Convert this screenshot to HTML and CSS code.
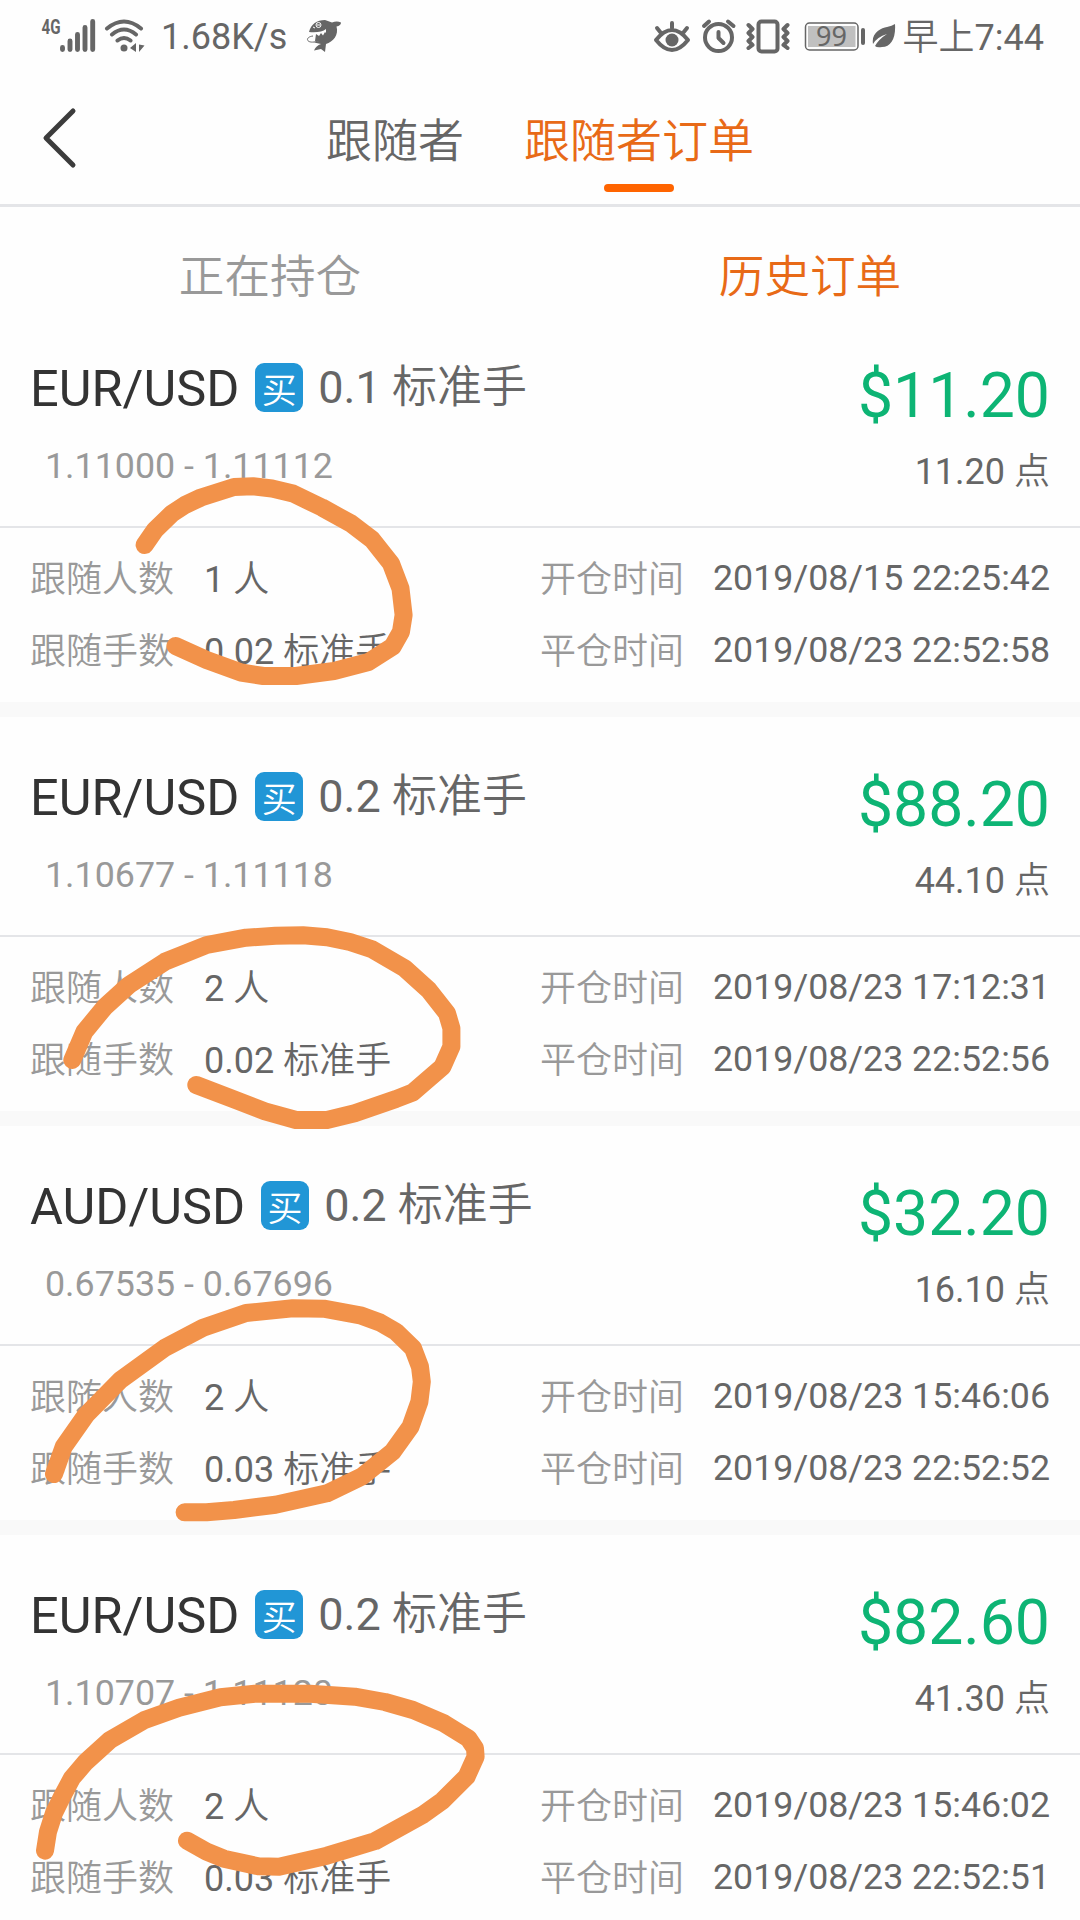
FILE: index.html
```html
<!DOCTYPE html>
<html lang="zh-CN">
<head>
<meta charset="utf-8">
<title>跟随者订单</title>
<link rel="stylesheet" href="styles.css">
</head>
<body>
<div class="screen">
  <header class="status">
    <div class="status-left">
      <svg class="net" width="110" height="40" viewBox="40 16 110 40">
        <text class="net-type" x="41.500" y="34" textLength="19" lengthAdjust="spacingAndGlyphs">4G</text>
        <g class="bars"><path d="M62.500 47.500V49.500M70 41V49.500M77.500 34.500V49.500M85 27.500V49.500M92.700 21.500V49.500"/></g>
        <g class="arcs"><path d="M107 28.500Q124 14.500 141 28.500M112 34.500Q124 24.500 136 34.500M117.500 40.500Q124 35.500 130.500 40.500"/></g>
        <circle cx="124" cy="48" r="3.500"/>
        <path d="M136 43V52L130 48ZM139 44.500V52L144.500 45.500Z"/>
      </svg>
      <span class="speed">1.68K/s</span>
      <svg class="shark" width="36" height="36" viewBox="306 19 36 36">
        <path d="M309 33C311 25 317 21 325 21L332 23.500Q337 21.500 341 23.500Q341 26.500 336.500 27.500C339 36 333 43 326 45L325 53L321 50L314 51.500Q316 46.500 321 45L314 43.500Q322 42 326 36L326 30Q321 34 309 33Z"/>
        <path d="M316 35L319 37L321 34L323 36.500L325 33L328 36L322 42L315 42Z"/>
        <path class="shark-line" d="M313 37C305 38 306 44 314 43Q320 43 324 39"/>
        <circle class="shark-eye" cx="318.500" cy="26" r="2.500"/>
        <path class="shark-eye" d="M317 26H320M313 28L315 29"/>
      </svg>
    </div>
    <div class="status-right">
      <svg class="sys" width="216" height="40" viewBox="650 14 216 40">
        <g class="stroke">
          <path d="M656 40Q672 20 688 40Q672 60 656 40ZM672 23V28M657 28L661 33M687 28L683 33"/>
          <circle cx="718.500" cy="37.500" r="13.500"/>
          <path d="M718.500 32V38L723.500 43M704 26L709 21.500M728 21.500L733.500 26"/>
          <rect x="758.500" y="21.500" width="19" height="30" rx="3"/>
          <path class="wave" d="M748.500 25L752.500 29L748.500 33L752.500 37L748.500 41L752.500 45L748.500 48M787.500 25L783.500 29L787.500 33L783.500 37L787.500 41L783.500 45L787.500 48"/>
        </g>
        <circle cx="672" cy="40" r="6.500"/>
        <rect class="battery" x="805.500" y="23" width="52.500" height="27" rx="4"/>
        <rect class="charge" x="808" y="26" width="37.500" height="21"/>
        <rect class="charge" x="845" y="26" width="10.500" height="21"/>
        <rect x="861" y="28" width="4" height="17" rx="2"/>
        <text class="level" x="831.500" y="45.500">99</text>
      </svg>
      <svg class="leaf" width="24" height="26" viewBox="0 0 24 26">
        <path d="M23 1C24 15 19 24 10 24Q5 25 3 23Q7 16 15 11Q5 14 1 21C-1 10 9 5 15 4Q20 3 23 1Z"/>
      </svg>
      <span class="clock"><span class="zh">早上</span>7:44</span>
    </div>
  </header>

  <nav class="navbar">
    <svg class="back" width="40" height="64" viewBox="0 0 40 64"><path d="M34 5L7 32L34 59"/></svg>
    <div class="tabs">
      <span class="tab zh">跟随者</span>
      <span class="tab zh active">跟随者订单</span>
    </div>
  </nav>

  <div class="subtabs zh">
    <span class="subtab">正在持仓</span>
    <span class="subtab active">历史订单</span>
  </div>

  <main class="orders">
    <section class="order">
      <div class="summary">
        <div class="left">
          <div class="title"><span class="pair">EUR/USD</span><span class="badge zh">买</span><span class="lots">0.1 <span class="zh">标准手</span></span></div>
          <div class="price">1.11000 - 1.11112</div>
        </div>
        <div class="right"><div class="profit">$11.20</div><div class="points">11.20 <span class="zh">点</span></div></div>
      </div>
      <div class="details">
        <span class="label zh">跟随人数</span><span class="value">1 <span class="zh">人</span></span>
        <span class="label zh">开仓时间</span><span class="value time">2019/08/15 22:25:42</span>
        <span class="label zh">跟随手数</span><span class="value">0.02 <span class="zh">标准手</span></span>
        <span class="label zh">平仓时间</span><span class="value time">2019/08/23 22:52:58</span>
      </div>
    </section>
    <section class="order">
      <div class="summary">
        <div class="left">
          <div class="title"><span class="pair">EUR/USD</span><span class="badge zh">买</span><span class="lots">0.2 <span class="zh">标准手</span></span></div>
          <div class="price">1.10677 - 1.11118</div>
        </div>
        <div class="right"><div class="profit">$88.20</div><div class="points">44.10 <span class="zh">点</span></div></div>
      </div>
      <div class="details">
        <span class="label zh">跟随人数</span><span class="value">2 <span class="zh">人</span></span>
        <span class="label zh">开仓时间</span><span class="value time">2019/08/23 17:12:31</span>
        <span class="label zh">跟随手数</span><span class="value">0.02 <span class="zh">标准手</span></span>
        <span class="label zh">平仓时间</span><span class="value time">2019/08/23 22:52:56</span>
      </div>
    </section>
    <section class="order">
      <div class="summary">
        <div class="left">
          <div class="title"><span class="pair">AUD/USD</span><span class="badge zh">买</span><span class="lots">0.2 <span class="zh">标准手</span></span></div>
          <div class="price">0.67535 - 0.67696</div>
        </div>
        <div class="right"><div class="profit">$32.20</div><div class="points">16.10 <span class="zh">点</span></div></div>
      </div>
      <div class="details">
        <span class="label zh">跟随人数</span><span class="value">2 <span class="zh">人</span></span>
        <span class="label zh">开仓时间</span><span class="value time">2019/08/23 15:46:06</span>
        <span class="label zh">跟随手数</span><span class="value">0.03 <span class="zh">标准手</span></span>
        <span class="label zh">平仓时间</span><span class="value time">2019/08/23 22:52:52</span>
      </div>
    </section>
    <section class="order">
      <div class="summary">
        <div class="left">
          <div class="title"><span class="pair">EUR/USD</span><span class="badge zh">买</span><span class="lots">0.2 <span class="zh">标准手</span></span></div>
          <div class="price">1.10707 - 1.11120</div>
        </div>
        <div class="right"><div class="profit">$82.60</div><div class="points">41.30 <span class="zh">点</span></div></div>
      </div>
      <div class="details">
        <span class="label zh">跟随人数</span><span class="value">2 <span class="zh">人</span></span>
        <span class="label zh">开仓时间</span><span class="value time">2019/08/23 15:46:02</span>
        <span class="label zh">跟随手数</span><span class="value">0.03 <span class="zh">标准手</span></span>
        <span class="label zh">平仓时间</span><span class="value time">2019/08/23 22:52:51</span>
      </div>
    </section>
  </main>

  <svg class="marker" width="1080" height="1920" viewBox="0 0 1080 1920">
    <polyline points="144.600,545 155,530 172,513.500 185,505 201,497.500 234,487 253,486.300 272,488.500 293,493.500 322,507.500 351,523.500 372,539.500 391,563.500 400.500,588.500 403.600,615 401,631.700 392.500,646.700 368.500,662 334,671 296,676 263.400,676 241,672.500 206.600,660 175.600,646"/>
    <polyline points="72.300,1060 84.400,1031.700 105,1006.700 129,985 165,961.700 206.600,945 246,937.700 275.500,935.700 303,935.300 327,937.300 350,942 372,949.300 404.600,968.300 428.700,990 447,1013.300 451.400,1028.300 451.400,1046.700 442.500,1066.700 413,1092.300 396,1099 354.700,1113.300 327,1120 296,1120 265,1111.300 234,1099.300 196.300,1085"/>
    <polyline points="54,1474 63.700,1446.700 86,1415 120.500,1380 165,1347.700 203,1327.700 246,1313 292.700,1308.300 323.700,1308.700 361.600,1315.700 380,1322.500 396,1331.700 413,1348.300 420,1366.700 421.800,1381.700 419.400,1401.700 410.500,1426.700 392.600,1451.700 361.600,1476.700 327,1493.300 275.500,1504.700 234,1510 206.600,1512.300 184.600,1512.300"/>
    <polyline points="45,1850.700 48,1831.700 54,1813 62,1796.700 72,1778 86,1761.700 110,1740 144.600,1720 179,1707.700 220.400,1697.300 254.800,1693.700 310,1693.700 354.700,1696.700 385,1702 413,1710 444,1723.300 468.300,1738.300 475,1748.300 475.600,1756.700 466.600,1776.700 442.500,1800.700 423.600,1814.300 375.300,1841 327,1855.700 279,1866.700 258.300,1866.300 223.800,1858.700 206.600,1851.700 187,1840.700"/>
  </svg>
</div>
</body>
</html>
```

FILE: styles.css
```css
* { box-sizing: border-box; }
body {
  margin: 0;
  background: #fefefe;
  color: #666;
  font-family: Roboto, "Noto Sans CJK SC", sans-serif;
}
.zh { font-family: "Noto Sans CJK SC", sans-serif; font-weight: 350; }
.screen {
  position: relative;
  width: 1080px;
  height: 1920px;
  overflow: hidden;
}
svg { display: block; fill: #666; flex: none; }

/* status bar */
.status {
  height: 75px;
  padding: 0 36px 0 40px;
  display: flex;
  justify-content: space-between;
  font-size: 36px;
  line-height: 75px;
  white-space: nowrap;
}
.status-left, .status-right { display: flex; align-items: center; height: 75px; }
.net, .shark { margin-top: -3px; }
.sys { margin-top: -7px; }
.net-type { font: 700 20px Roboto, sans-serif; }
.bars, .arcs { fill: none; stroke: #666; stroke-width: 4.900; stroke-linecap: round; }
.arcs { stroke-width: 4; }
.speed { margin-left: 11px; width: 145px; }
.shark-line { fill: none; stroke: #666; stroke-width: 1; }
.shark-eye { fill: none; stroke: #fefefe; stroke-width: 1; }
.stroke { fill: none; stroke: #666; stroke-width: 4; stroke-linecap: round; stroke-linejoin: round; }
.battery { fill: none; stroke: #666; stroke-width: 1.500; }
.charge { fill: #c0c0c0; }
.level { font: 27px "Noto Sans", sans-serif; text-anchor: middle; }
.leaf { margin: -4px 0 0 6px; }
.clock { margin: -3px 0 0 7px; }

/* navigation */
.navbar {
  height: 132px;
  border-bottom: 3px solid #e4e5e8;
  display: flex;
  align-items: flex-start;
  padding: 28px 0 0 39px;
}
.back { margin-top: 3px; fill: none; stroke: #3c3c3c; stroke-width: 5; stroke-linecap: round; stroke-linejoin: round; }
.tabs { display: flex; gap: 60px; margin-left: 247px; font-size: 46px; line-height: 68px; }
.tab { display: flex; flex-direction: column; align-items: center; }
.tab.active, .subtab.active { color: #e86a17; }
.tab.active::after {
  content: "";
  width: 70px;
  height: 8px;
  margin-top: 13px;
  border-radius: 4px;
  background: #ff6400;
}
.subtabs {
  display: flex;
  height: 101px;
  padding-top: 32px;
  font-size: 45.600px;
  line-height: 68px;
  color: #999;
}
.subtab { flex: 1; text-align: center; }

/* orders */
.order { height: 409px; border-bottom: 15px solid #f9f9f9; }
.summary {
  height: 220px;
  border-bottom: 2px solid #e4e5e8;
  display: flex;
  justify-content: space-between;
  padding: 55px 30px 0 30px;
}
.title { display: flex; height: 48px; }
.pair { font-size: 50.500px; line-height: 52px; color: #333; }
.badge {
  width: 48px;
  height: 49px;
  margin: 0 15px 0 16px;
  border-radius: 9px;
  background: #2196d6;
  color: #fff;
  font-size: 35px;
  line-height: 50px;
  text-align: center;
}
.lots { font-size: 45px; line-height: 41px; }
.price { margin: 34px 0 0 15px; font-size: 35.800px; line-height: 42px; color: #999; }
.right { text-align: right; }
.profit { font-size: 62.500px; line-height: 66px; color: #0db474; }
.points { margin-top: 18px; font-size: 36px; line-height: 42px; }
.details {
  display: grid;
  grid-template-columns: 174px 336px 160px 1fr;
  grid-auto-rows: 72px;
  padding: 12px 30px 0 30px;
  font-size: 36px;
  line-height: 72px;
  white-space: nowrap;
}
.label { color: #999; }
.time { text-align: right; font-size: 35.750px; line-height: 77px; }

/* hand-drawn marker strokes over the list */
.marker { position: absolute; inset: 0; }
.marker polyline {
  fill: none;
  stroke: #f2924a;
  stroke-width: 18;
  stroke-linecap: round;
  stroke-linejoin: round;
}
```
